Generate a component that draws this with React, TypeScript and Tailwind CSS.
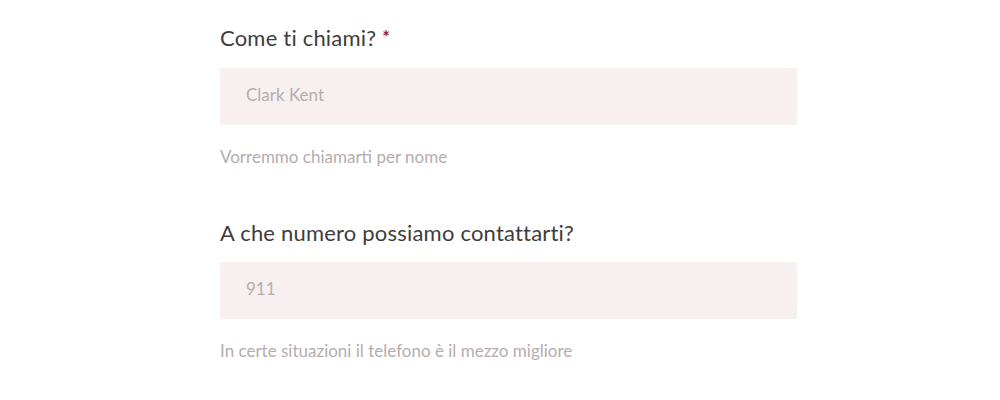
import React from "react";

function Field({ label, required, placeholder, help }: { label: string; required?: boolean; placeholder: string; help: string }) {
  return (
    <div className="flex flex-col">
      <label className="text-[22px] leading-[30px] text-[#403c3c] tracking-[0.2px]">
        {label}
        {required && <span className="relative top-[-2px] ml-[6px] text-[18px] font-bold text-[#9e1f2a]">*</span>}
      </label>
      <input
        placeholder={placeholder}
        className="mt-[14px] h-[57px] w-full rounded-[2px] bg-[#f8f0f0] px-[26px] pb-[5px] text-[17px] outline-none placeholder:text-[#b5adad] text-[#3b3838]"
      />
      <p className="mt-[20px] text-[17px] leading-[24px] text-[#b5adad]">{help}</p>
    </div>
  );
}

export default function App() {
  return (
    <div className="min-h-[400px] w-[1000px] bg-white" style={{ fontFamily: "Lato, 'Noto Sans', sans-serif" }}>
      <div className="ml-[220px] w-[577px] pt-[23px] flex flex-col gap-[49px]">
        <Field label="Come ti chiami?" required placeholder="Clark Kent" help="Vorremmo chiamarti per nome" />
        <Field label="A che numero possiamo contattarti?" placeholder="911" help="In certe situazioni il telefono è il mezzo migliore" />
      </div>
    </div>
  );
}
